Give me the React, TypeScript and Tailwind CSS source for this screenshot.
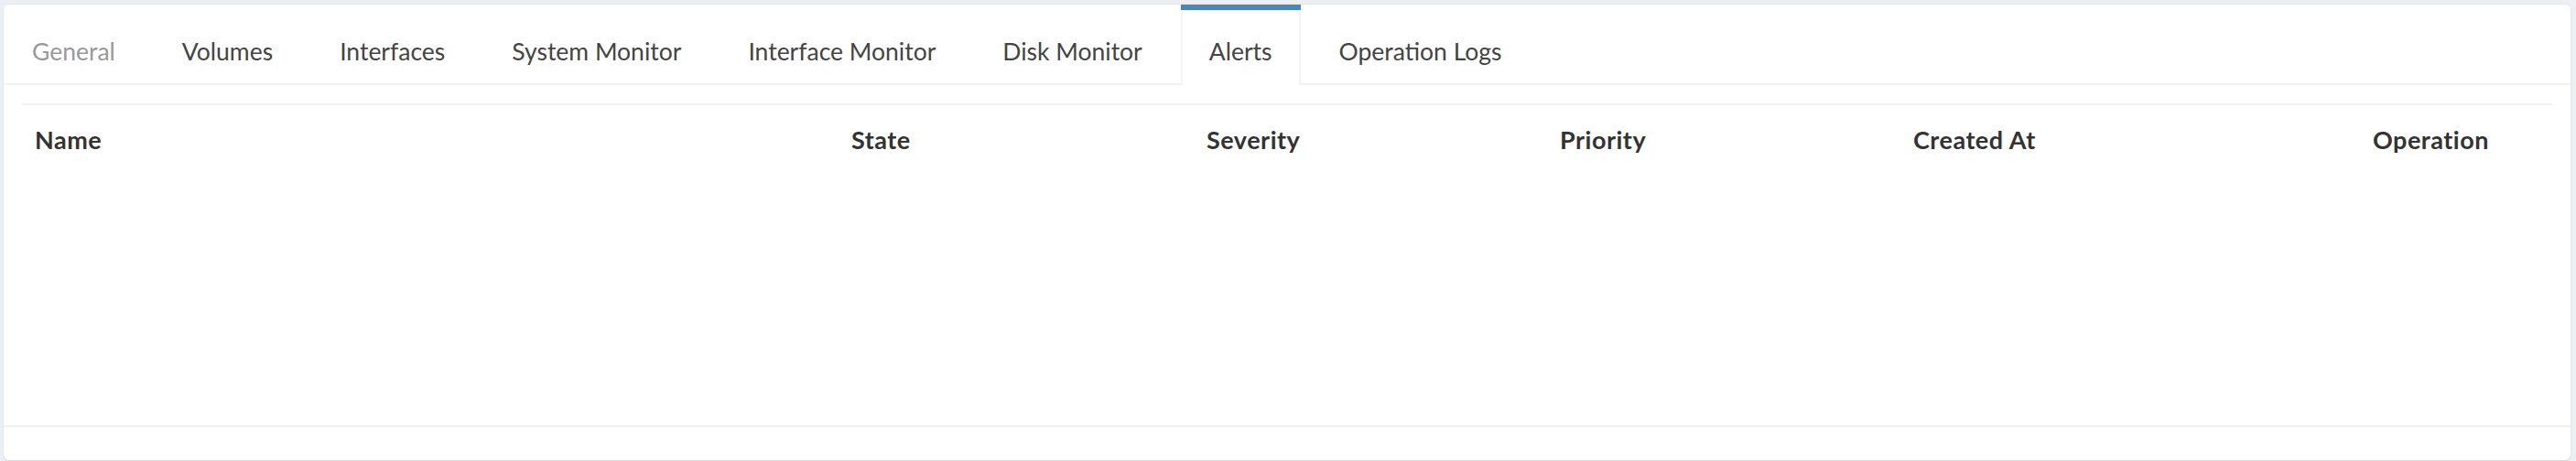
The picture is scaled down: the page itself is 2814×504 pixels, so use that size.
const TABS = [
  { label: 'General', muted: true },
  { label: 'Volumes' },
  { label: 'Interfaces' },
  { label: 'System Monitor' },
  { label: 'Interface Monitor' },
  { label: 'Disk Monitor' },
  { label: 'Alerts', active: true },
  { label: 'Operation Logs' },
]

const COLUMNS = ['Name', 'State', 'Severity', 'Priority', 'Created At', 'Operation']

export default function App() {
  return (
    <div
      className="h-[504px] overflow-hidden bg-[#ecf0f5] pl-[4px] pr-[6px] pt-[4px]"
      style={{ fontFamily: 'Lato, "Noto Sans", sans-serif' }}
    >
      <div className="flex h-[499px] flex-col rounded-[6px] border-t border-[#e4e7eb] bg-white shadow-[0_1px_2px_rgba(0,0,0,0.12)]">
        {/* tabs */}
        <ul className="flex border-b-2 border-[#f2f2f2]">
          {TABS.map((tab) => (
            <li
              key={tab.label}
              className={
                'mr-[11px] -mb-[2px] border-t-[6px] ' +
                (tab.active ? 'border-[#4a87b6] bg-white' : 'border-transparent')
              }
            >
              <a
                className={
                  'block h-[82px] pt-[8px] text-[26.5px] leading-[74px] ' +
                  (tab.active ? 'border-x-2 border-[#f4f4f4] px-[29px]' : 'px-[31px]') +
                  (tab.muted ? ' text-[#999]' : ' text-[#444]')
                }
              >
                {tab.label}
              </a>
            </li>
          ))}
        </ul>

        {/* table */}
        <div className="flex-1 px-[20px] pt-[20px]">
          <div className="grid grid-cols-[892px_388px_386px_386px_502px_1fr] border-t-2 border-[#f2f2f2]">
            {COLUMNS.map((col) => (
              <div
                key={col}
                className="px-[14px] pt-[20px] pb-[18px] text-[27px] font-bold leading-[36px] tracking-[0.5px] text-[#333]"
              >
                {col}
              </div>
            ))}
          </div>
        </div>

        {/* footer */}
        <div className="h-[38px] border-t-2 border-[#f0f0f0]" />
      </div>
    </div>
  )
}
